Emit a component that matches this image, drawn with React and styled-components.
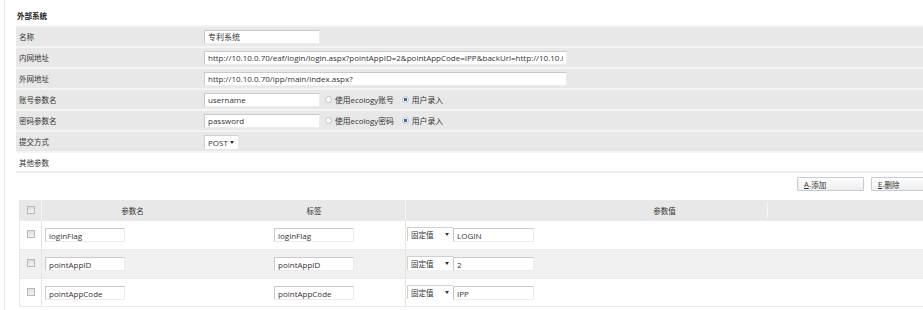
import React from 'react';
import styled, { createGlobalStyle } from 'styled-components';

const Global = createGlobalStyle`
  html, body { margin: 0; padding: 0; background: #fff; overflow: hidden; }
  body {
    font-family: "Open Sans", "Noto Sans CJK SC", sans-serif;
    font-size: 7.5px;
    color: #333;
  }
  * { box-sizing: border-box; }
`;

const Page = styled.div`
  margin-left: 4px;
  border-left: 1px solid #e2e2e2;
  height: 310px;
  padding-left: 11px;
`;

const Title = styled.div`
  height: 25px;
  padding: 5px 0 0 1px;
  display: flex;
  align-items: center;
  font-weight: bold;
  color: #222;
`;

const FormRow = styled.div`
  display: grid;
  grid-template-columns: 188px 1fr;
  align-items: center;
  height: 21px;
  border-top: 2px solid #f4f4f4;
  background: ${p => (p.$plain ? '#fff' : '#e8e8e8')};
  ${p => p.$plain && 'height: 22px; border-bottom: 2px solid #eeeeee;'}
`;

const Label = styled.div`
  padding-left: 3px;
`;

const Field = styled.div`
  display: flex;
  align-items: center;
`;

const TextBox = styled.input`
  width: ${p => p.$w}px;
  height: 14px;
  padding: 0 3px;
  border: 1px solid;
  border-color: #c9c9c9 #ececec #ececec #c9c9c9;
  background: #fff;
  font-family: inherit;
  font-size: 8px;
  color: #333;
  outline: none;
  margin: 0;
`;

const RadioGroup = styled.div`
  display: flex;
  align-items: center;
  margin-left: 5px;
  gap: 8px;
  font-size: 7.8px;
`;

const RadioItem = styled.label`
  display: flex;
  align-items: center;
  gap: 3px;
`;

const Radio = styled.span`
  width: 7px;
  height: 7px;
  border-radius: 50%;
  border: 1px solid #c4c4c4;
  background: ${p => (p.$on ? 'radial-gradient(circle, #2f6fb8 0 1.5px, #f4f4f4 2px)' : '#fafafa')};
`;

const Select = styled.div`
  width: ${p => p.$w}px;
  height: 14px;
  display: flex;
  align-items: center;
  justify-content: space-between;
  padding: 0 4px 0 3px;
  background: #fff;
  border-top: 1px solid #d0d0d0;
  border-left: 1px solid #d0d0d0;
  color: #333;
  font-size: ${p => (p.$latin ? '8px' : '7.5px')};
`;

const Arrow = styled.span`
  width: 0;
  height: 0;
  border-left: 2.5px solid transparent;
  border-right: 2.5px solid transparent;
  border-top: 3px solid #333;
`;

const Toolbar = styled.div`
  display: flex;
  justify-content: flex-end;
  gap: 7px;
  margin-top: 4px;
  margin-right: -15px;
  height: 14px;
`;

const Button = styled.div`
  width: 67px;
  height: 14px;
  padding-left: 6px;
  display: flex;
  align-items: center;
  border: 1px solid #c6ccd3;
  border-radius: 1px;
  background: linear-gradient(#fdfdfd, #eeeeee);
  color: #333;
  u { text-decoration: underline; }
`;

const Table = styled.div`
  margin: 9px 0 0 3px;
  border-left: 1px solid #e6e6e6;
`;

const HeadRow = styled.div`
  display: grid;
  grid-template-columns: 21px 182px 182px 1fr;
  height: 20px;
  background: #e8e8e8;
`;

const HeadCell = styled.div`
  display: flex;
  align-items: center;
  justify-content: center;
  border-left: ${p => (p.$first ? 'none' : '1px solid #f5f5f5')};
  ${p => p.$split && `background: linear-gradient(#f5f5f5, #f5f5f5) no-repeat 361px 2px / 1px 16px;`}
`;

const BodyRow = styled.div`
  display: grid;
  grid-template-columns: 21px 182px 182px 1fr;
  height: 29px;
  border-top: 1px solid #ebebeb;
  background: ${p => (p.$alt ? '#f1f1f1' : '#fff')};
  &:last-child { border-bottom: 1px solid #ebebeb; }
`;

const Cell = styled.div`
  display: flex;
  align-items: flex-start;
  justify-content: ${p => (p.$center ? 'center' : 'flex-start')};
  padding: ${p => p.$pad || '7px 0 0 3px'};
  border-left: ${p => (p.$line ? '1px solid #e4e4e4' : 'none')};
`;

const Check = styled.span`
  width: 8px;
  height: 8px;
  border: 1px solid #b8b8b8;
  background: linear-gradient(#dedede, #f4f4f4);
`;

const CheckCell = styled.div`
  display: flex;
  justify-content: center;
  padding-top: ${p => p.$top}px;
`;

const params = [
  { name: 'loginFlag', value: 'LOGIN' },
  { name: 'pointAppID', value: '2' },
  { name: 'pointAppCode', value: 'IPP' },
];

function RadioPair({ first }) {
  return (
    <RadioGroup>
      <RadioItem><Radio />{first}</RadioItem>
      <RadioItem><Radio $on />用户录入</RadioItem>
    </RadioGroup>
  );
}

export default function App() {
  return (
    <>
      <Global />
      <Page>
        <Title>外部系统</Title>
        <FormRow>
          <Label>名称</Label>
          <Field><TextBox $w={116} readOnly value="专利系统" /></Field>
        </FormRow>
        <FormRow>
          <Label>内网地址</Label>
          <Field>
            <TextBox $w={363} readOnly value="http://10.10.0.70/eaf/login/login.aspx?pointAppID=2&pointAppCode=IPP&backUrl=http://10.10.0.70/ipp/main/index.aspx" />
          </Field>
        </FormRow>
        <FormRow>
          <Label>外网地址</Label>
          <Field><TextBox $w={363} readOnly value="http://10.10.0.70/ipp/main/index.aspx?" /></Field>
        </FormRow>
        <FormRow>
          <Label>账号参数名</Label>
          <Field>
            <TextBox $w={116} readOnly value="username" />
            <RadioPair first="使用ecology账号" />
          </Field>
        </FormRow>
        <FormRow>
          <Label>密码参数名</Label>
          <Field>
            <TextBox $w={116} readOnly value="password" />
            <RadioPair first="使用ecology密码" />
          </Field>
        </FormRow>
        <FormRow>
          <Label>提交方式</Label>
          <Field><Select $w={34} $latin>POST<Arrow /></Select></Field>
        </FormRow>
        <FormRow $plain>
          <Label>其他参数</Label>
          <div />
        </FormRow>
        <Toolbar>
          <Button><u>A</u>-添加</Button>
          <Button><u>E</u>-删除</Button>
        </Toolbar>
        <Table>
          <HeadRow>
            <HeadCell $first><Check /></HeadCell>
            <HeadCell>参数名</HeadCell>
            <HeadCell $first>标签</HeadCell>
            <HeadCell $split>参数值</HeadCell>
          </HeadRow>
          {params.map((p, i) => (
            <BodyRow key={p.name} $alt={i === 1}>
              <CheckCell $top={9}><Check /></CheckCell>
              <Cell $line><TextBox $w={80} readOnly value={p.name} /></Cell>
              <Cell $center $pad="7px 0 0 0"><TextBox $w={80} readOnly value={p.name} /></Cell>
              <Cell $line $pad="6px 0 0 1px">
                <Select $w={46}>固定值<Arrow /></Select>
                <TextBox $w={81} readOnly value={p.value} style={{ marginTop: 1 }} />
              </Cell>
            </BodyRow>
          ))}
        </Table>
      </Page>
    </>
  );
}
